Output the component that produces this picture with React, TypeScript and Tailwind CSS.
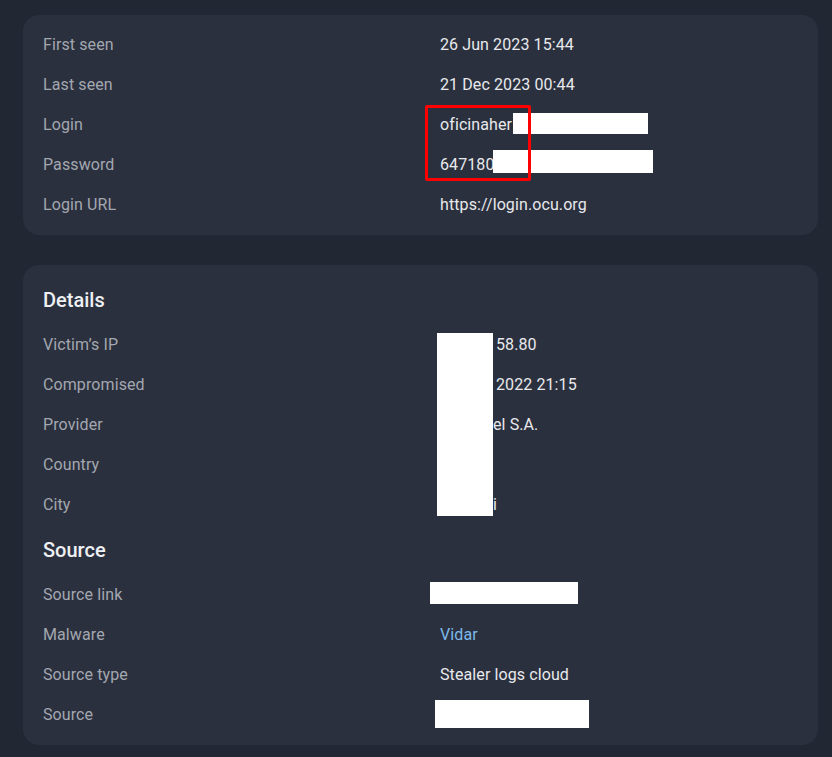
import React from 'react';

type Row = { label: string; value?: string; pad?: string; link?: boolean };

const topRows: Row[] = [
  { label: 'First seen', value: '26 Jun 2023 15:44' },
  { label: 'Last seen', value: '21 Dec 2023 00:44' },
  { label: 'Login', value: 'oficinaher' },
  { label: 'Password', value: '647180' },
  { label: 'Login URL', value: 'https://login.ocu.org' },
];

const detailRows: Row[] = [
  { label: 'Victim’s IP', value: '58.80', pad: 'pl-[56px]' },
  { label: 'Compromised', value: '2022 21:15', pad: 'pl-[56px]' },
  { label: 'Provider', value: 'el S.A.', pad: 'pl-[53px]' },
  { label: 'Country', value: '' },
  { label: 'City', value: 'i', pad: 'pl-[53px]' },
];

const sourceRows: Row[] = [
  { label: 'Source link', value: '' },
  { label: 'Malware', value: 'Vidar', link: true },
  { label: 'Source type', value: 'Stealer logs cloud' },
  { label: 'Source', value: '' },
];

const InfoRow: React.FC<{ row: Row }> = ({ row }) => (
  <div className="flex items-center h-10 text-base tracking-[0.1px]">
    <div className="w-[397px] shrink-0 text-[#a3a7b0]">{row.label}</div>
    <div className={`${row.pad ?? ''} ${row.link ? 'text-[#7db9ea]' : 'text-[#e8e9ec]'}`}>{row.value}</div>
  </div>
);

const Heading: React.FC<{ children: React.ReactNode }> = ({ children }) => (
  <div className="h-[50px] flex items-center text-xl font-medium text-[#eef0f3]">{children}</div>
);

const App: React.FC = () => {
  return (
    <div
      className="min-h-[757px] bg-[#222734] pt-[15px] pb-3 pl-[23px] pr-[14px] flex flex-col gap-[30px]"
      style={{ fontFamily: 'Roboto, "Liberation Sans", sans-serif' }}
    >
      <div className="relative bg-[#2b303e] rounded-2xl px-5 py-[10px]">
        {topRows.map(r => (
          <InfoRow key={r.label} row={r} />
        ))}
        <div className="absolute left-[490px] top-[98px] w-[135px] h-[21px] bg-white" />
        <div className="absolute left-[470px] top-[135px] w-[160px] h-[23px] bg-white" />
        <div className="absolute left-[402px] top-[90px] w-[106px] h-[76px] border-[3px] border-[#ff0000] rounded-[2px]" />
      </div>

      <div className="relative bg-[#2b303e] rounded-2xl px-5 py-[10px]">
        <Heading>Details</Heading>
        {detailRows.map(r => (
          <InfoRow key={r.label} row={r} />
        ))}
        <Heading>Source</Heading>
        {sourceRows.map(r => (
          <InfoRow key={r.label} row={r} />
        ))}
        <div className="absolute left-[414px] top-[68px] w-[56px] h-[183px] bg-white" />
        <div className="absolute left-[407px] top-[317px] w-[148px] h-[22px] bg-white" />
        <div className="absolute left-[412px] top-[435px] w-[154px] h-[28px] bg-white" />
      </div>
    </div>
  );
};

export default App;
